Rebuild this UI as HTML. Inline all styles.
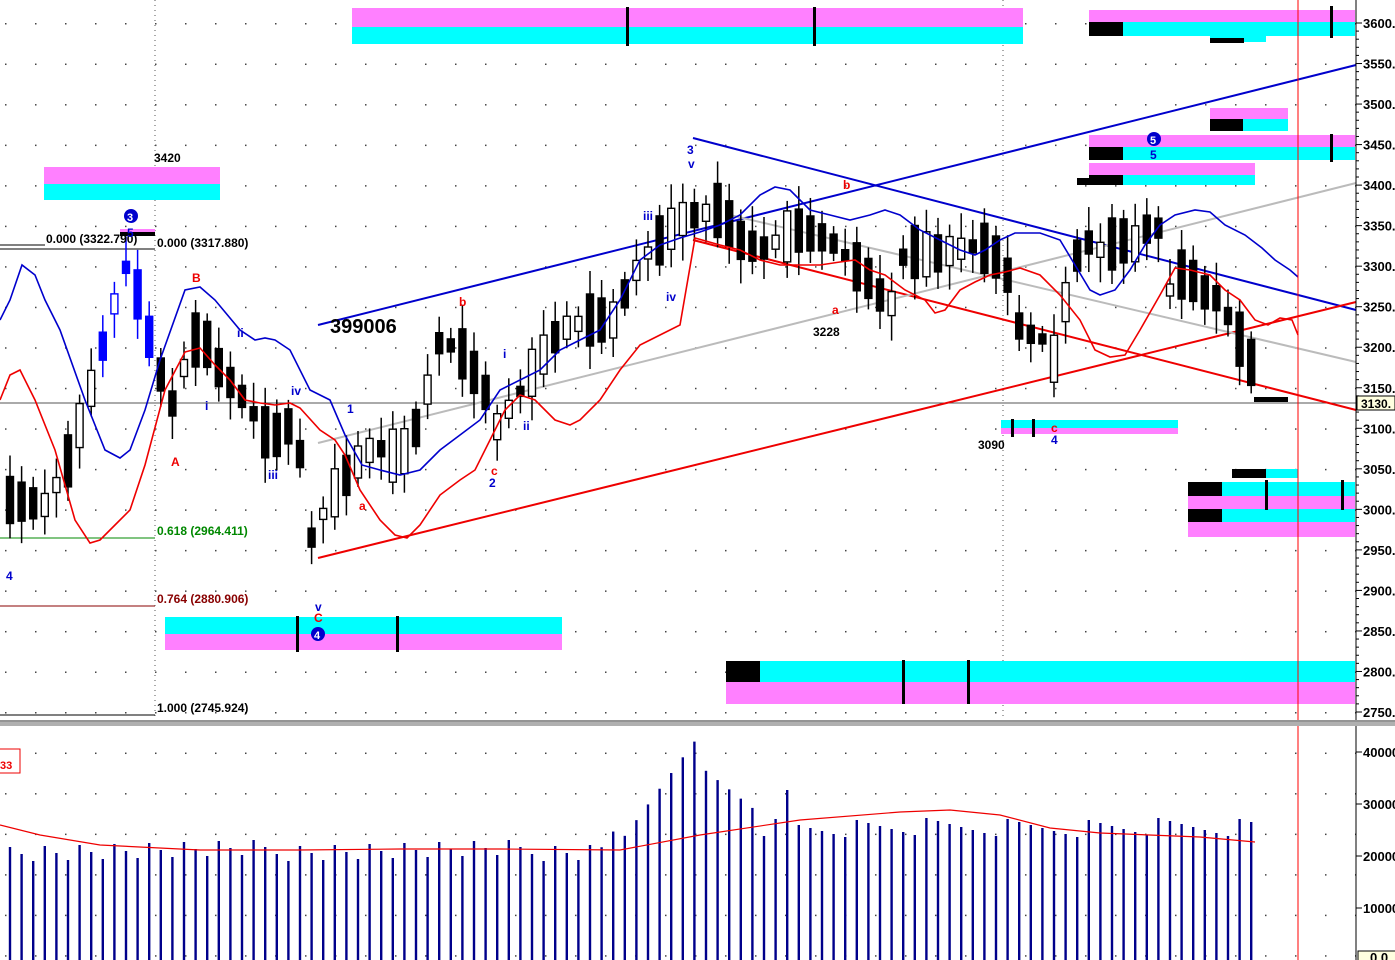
<!DOCTYPE html>
<html><head><meta charset="utf-8"><style>
html,body{margin:0;padding:0;background:#fff;overflow:hidden}
svg{display:block}
text{font-family:"Liberation Sans",Arial,sans-serif;font-weight:bold}
</style></head><body>
<svg id="s" width="1395" height="960" xmlns="http://www.w3.org/2000/svg">
<defs>
<pattern id="dots" x="0" y="0" width="30" height="40.53" patternUnits="userSpaceOnUse" patternTransform="translate(5,23)">
<rect x="0" y="0" width="1.5" height="1.5" fill="#444"/></pattern>
</defs>
<rect x="0" y="0" width="1395" height="960" fill="#fff"/>
<rect x="0" y="0" width="1356" height="720" fill="url(#dots)"/>
<rect x="0" y="730" width="1356" height="230" fill="url(#dots)"/>
<line x1="155" y1="0" x2="155" y2="720" stroke="#555" stroke-dasharray="1,4"/>
<line x1="1003" y1="0" x2="1003" y2="720" stroke="#555" stroke-dasharray="1,4"/>
<g id="bars">
<rect x="352" y="8" width="671" height="19" fill="#ff80ff"/><rect x="352" y="27" width="671" height="17" fill="#00ffff"/>
<rect x="626" y="7" width="3" height="39" fill="#000"/><rect x="813" y="7" width="3" height="39" fill="#000"/>
<rect x="44" y="167" width="176" height="17" fill="#ff80ff"/><rect x="44" y="184" width="176" height="16" fill="#00ffff"/>
<rect x="1089" y="10" width="266" height="12" fill="#ff80ff"/><rect x="1089" y="22" width="266" height="14" fill="#00ffff"/><rect x="1089" y="22" width="34" height="14" fill="#000"/>
<rect x="1210" y="36" width="56" height="6" fill="#00ffff"/><rect x="1210" y="38" width="34" height="5" fill="#000"/><rect x="1330" y="6" width="3" height="32" fill="#000"/>
<rect x="1210" y="108" width="78" height="11" fill="#ff80ff"/><rect x="1210" y="119" width="78" height="12" fill="#00ffff"/><rect x="1210" y="119" width="33" height="12" fill="#000"/>
<rect x="1089" y="135" width="266" height="12" fill="#ff80ff"/><rect x="1089" y="147" width="266" height="13" fill="#00ffff"/><rect x="1089" y="147" width="34" height="13" fill="#000"/><rect x="1330" y="134" width="3" height="28" fill="#000"/>
<rect x="1089" y="163" width="166" height="12" fill="#ff80ff"/><rect x="1089" y="175" width="166" height="10" fill="#00ffff"/><rect x="1077" y="178" width="46" height="7" fill="#000"/><rect x="1089" y="175" width="34" height="10" fill="#000"/>
<rect x="1001" y="420" width="177" height="8" fill="#00ffff"/><rect x="1001" y="428" width="177" height="6" fill="#ff80ff"/>
<rect x="1232" y="469" width="66" height="9" fill="#00ffff"/><rect x="1232" y="469" width="34" height="9" fill="#000"/>
<rect x="1188" y="482" width="167" height="14" fill="#00ffff"/><rect x="1188" y="482" width="34" height="14" fill="#000"/>
<rect x="1188" y="496" width="167" height="13" fill="#ff80ff"/>
<rect x="1188" y="509" width="167" height="13" fill="#00ffff"/><rect x="1188" y="509" width="34" height="13" fill="#000"/>
<rect x="1188" y="522" width="167" height="15" fill="#ff80ff"/>
<rect x="1265" y="480" width="3" height="30" fill="#000"/><rect x="1341" y="480" width="3" height="30" fill="#000"/>
<rect x="165" y="617" width="397" height="17" fill="#00ffff"/><rect x="165" y="634" width="397" height="16" fill="#ff80ff"/>
<rect x="296" y="616" width="3" height="36" fill="#000"/><rect x="396" y="616" width="3" height="36" fill="#000"/>
<rect x="726" y="661" width="629" height="21" fill="#00ffff"/><rect x="726" y="661" width="34" height="21" fill="#000"/><rect x="726" y="682" width="629" height="22" fill="#ff80ff"/>
<rect x="902" y="660" width="3" height="44" fill="#000"/><rect x="967" y="660" width="3" height="44" fill="#000"/>
<rect x="1011" y="419" width="3" height="18" fill="#000"/><rect x="1032" y="419" width="3" height="18" fill="#000"/>
<rect x="1254" y="397" width="34" height="5" fill="#000"/>
<rect x="120" y="229" width="35" height="5" fill="#ff80ff"/><rect x="120" y="232" width="35" height="4" fill="#000"/>
</g>
<line x1="0" y1="403" x2="1356" y2="403" stroke="#555" stroke-width="1"/>
<line x1="0" y1="249" x2="155" y2="249" stroke="#000"/><line x1="0" y1="245" x2="45" y2="245" stroke="#000"/>
<line x1="0" y1="538" x2="155" y2="538" stroke="#080"/>
<line x1="0" y1="606" x2="155" y2="606" stroke="#800"/>
<line x1="0" y1="715" x2="155" y2="715" stroke="#000"/>
<line x1="318" y1="325" x2="1356" y2="65" stroke="#00c" stroke-width="2"/>
<line x1="693" y1="138" x2="1356" y2="310" stroke="#00c" stroke-width="2"/>
<line x1="318" y1="558" x2="1356" y2="302" stroke="#e00" stroke-width="2"/>
<line x1="693" y1="240" x2="1356" y2="410" stroke="#e00" stroke-width="2"/>
<line x1="318" y1="443" x2="1356" y2="183" stroke="#bbb" stroke-width="2"/>
<line x1="730" y1="215" x2="1356" y2="362" stroke="#bbb" stroke-width="2"/>
<g id="cand"></g>
<polyline id="blue" fill="none" stroke="#00c" stroke-width="1.6"/>
<polyline id="red" fill="none" stroke="#e00" stroke-width="1.6"/>
<g id="vol"></g>
<polyline id="vred" fill="none" stroke="#e00" stroke-width="1.2" points="0,825 40,835 100,845 200,850 300,850 400,849 500,849 620,850 700,835 800,820 900,812 950,810 1000,815 1050,828 1100,833 1200,837 1255,842"/>
<line x1="1298" y1="0" x2="1298" y2="960" stroke="#f00" stroke-width="1"/>
<rect x="1356" y="0" width="39" height="960" fill="#fff"/>
<line x1="1356" y1="0" x2="1356" y2="960" stroke="#000"/>
<rect x="0" y="720" width="1395" height="6" fill="#b0b0b0"/>
<line x1="0" y1="721" x2="1395" y2="721" stroke="#777"/>
<g id="axis" font-size="13" fill="#000"></g>
<rect x="1357" y="396" width="38" height="14" fill="#ffffe0" stroke="#000"/>
<text x="1361" y="408" font-size="12">3130.</text>
<g font-size="12">
<text x="154" y="162">3420</text>
<text x="46" y="243">0.000 (3322.790)</text>
<text x="157" y="247">0.000 (3317.880)</text>
<text x="157" y="535" fill="#080">0.618 (2964.411)</text>
<text x="157" y="603" fill="#800">0.764 (2880.906)</text>
<text x="157" y="712">1.000 (2745.924)</text>
<text x="813" y="336">3228</text>
<text x="978" y="449">3090</text>
<text x="330" y="333" font-size="20">399006</text>
<g fill="#e00"><text x="192" y="282">B</text><text x="171" y="466">A</text><text x="459" y="306">b</text><text x="491" y="475">c</text><text x="359" y="510">a</text><text x="843" y="189">b</text><text x="832" y="314">a</text><text x="1051" y="432">c</text><text x="314" y="622">C</text></g>
<g fill="#00c"><text x="6" y="580">4</text><text x="127" y="237">5</text><text x="237" y="337">ii</text><text x="205" y="410">i</text><text x="291" y="395">iv</text><text x="268" y="479">iii</text><text x="347" y="413">1</text><text x="489" y="487">2</text><text x="523" y="430">ii</text><text x="503" y="358">i</text><text x="643" y="220">iii</text><text x="666" y="301">iv</text><text x="687" y="154">3</text><text x="688" y="168">v</text><text x="315" y="611">v</text><text x="1051" y="444">4</text><text x="1150" y="159">5</text></g>
<circle cx="131" cy="216" r="7" fill="#00c"/><text x="127" y="221" fill="#fff" font-size="11">3</text>
<circle cx="318" cy="634" r="7" fill="#00c"/><text x="314" y="639" fill="#fff" font-size="11">4</text>
<circle cx="1154" cy="139" r="7" fill="#00c"/><text x="1150" y="144" fill="#fff" font-size="11">5</text>
</g>
<rect x="-2" y="749" width="22" height="24" fill="#fff" stroke="#e00"/><text x="0" y="769" fill="#e00" font-size="11">33</text>
</svg>
<script>
(function(){
var NS="http://www.w3.org/2000/svg";
function el(p,t,a){var e=document.createElementNS(NS,t);for(var k in a)e.setAttribute(k,a[k]);p.appendChild(e);return e;}
function pts(a){var s="";for(var i=0;i<a.length;i+=2)s+=a[i]+","+a[i+1]+" ";return s;}
document.getElementById("blue").setAttribute("points",pts([0,320,10,300,22,265,35,275,45,300,60,330,85,400,105,450,120,458,130,450,145,410,160,360,185,290,200,287,215,300,240,330,255,340,265,338,275,340,290,350,310,390,330,400,345,435,362,465,380,470,400,475,420,470,440,450,460,435,480,420,500,390,520,380,540,370,560,350,580,340,600,330,620,300,640,260,660,245,680,238,700,232,720,225,740,215,760,195,775,187,790,190,810,210,830,215,850,220,870,215,885,210,900,215,920,230,940,240,960,250,975,255,985,250,1000,240,1015,233,1040,233,1060,240,1075,265,1090,290,1100,295,1115,290,1130,270,1145,245,1160,225,1175,215,1195,210,1210,212,1225,225,1245,235,1262,248,1275,260,1290,270,1298,277]));
document.getElementById("red").setAttribute("points",pts([0,400,10,375,20,370,35,400,55,450,75,520,90,543,100,540,115,525,130,510,145,465,165,390,185,352,200,348,215,365,230,380,245,400,260,403,275,405,290,403,300,408,320,430,335,440,345,455,360,490,380,520,395,535,407,538,420,525,440,495,460,480,475,470,490,440,505,410,520,395,535,400,555,420,570,425,580,420,600,400,620,370,640,345,660,335,680,325,695,238,720,245,740,250,760,260,780,265,800,265,820,265,840,262,855,260,870,270,885,275,905,290,925,300,935,313,945,310,960,290,975,282,990,275,1005,272,1020,268,1040,275,1060,295,1080,320,1095,350,1110,357,1125,355,1140,330,1160,295,1175,268,1190,270,1210,275,1225,290,1240,300,1255,320,1268,325,1280,318,1292,320,1298,335]));
var key=[[10,500],[45,505],[65,470],[88,400],[110,320],[125,265],[140,300],[155,360],[175,410],[190,340],[205,340],[220,370],[245,400],[270,440],[297,420],[308,545],[330,500],[350,470],[375,445],[400,460],[420,420],[440,340],[460,350],[485,390],[495,430],[515,400],[540,360],[560,330],[590,320],[615,320],[630,280],[650,250],[680,220],[695,215],[720,210],[740,240],[760,250],[780,240],[800,230],[830,240],[850,260],[870,280],[890,310],[905,250],[930,255],[955,250],[980,245],[1000,260],[1010,280],[1020,330],[1045,340],[1057,365],[1070,270],[1085,240],[1100,250],[1120,240],[1140,245],[1155,210],[1170,290],[1185,270],[1200,290],[1220,300],[1235,330],[1255,370]];
function mid(x){for(var i=0;i<key.length-1;i++){if(x<=key[i+1][0]){var a=key[i],b=key[i+1],t=(x-a[0])/(b[0]-a[0]);return a[1]+t*(b[1]-a[1]);}}return key[key.length-1][1];}
var g=document.getElementById("cand"),v=document.getElementById("vol");
var n=0;
for(var x=10;x<=1256;x+=11.6){n++;var m=mid(x),m2=mid(x+11.6);var up=m2<m;var h=10+((n*37)%45);var col=(x<160&&x>95)?"#00f":"#000";
var bt=m-h/2,bb=m+h/2;
el(g,"line",{x1:x,y1:bt-8-(n*13%18),x2:x,y2:bb+8+(n*7%18),stroke:col,"stroke-width":1.5});
el(g,"rect",{x:x-3.5,y:bt,width:7,height:h,fill:(n%3==0||!up)?col:"#fff",stroke:col,"stroke-width":1.4});
var vt;
if(x<600)vt=848+((n*29)%22)-8;else if(x<705){var k=(x-600)/105;vt=845-k*115+((n*17)%20);}else if(x<760)vt=770+(x-705)*0.8;else vt=828+((n*23)%20)-10;
if(x>=784&&x<=796)vt=790;
el(v,"rect",{x:x-1.2,y:vt,width:2.4,height:960-vt,fill:"#00008b"});}
var ax=document.getElementById("axis");
for(var p=3600;p>=2750;p-=50){var y=23+(3600-p)*0.8106;el(ax,"line",{x1:1356,y1:y,x2:1362,y2:y,stroke:"#000"});var t=el(ax,"text",{x:1363,y:y+5});t.textContent=p+".";
for(var j=1;j<5;j++){var yy=y+j*8.1;if(yy<718)el(ax,"line",{x1:1356,y1:yy,x2:1359,y2:yy,stroke:"#000"});}}
var vl=[[40000,752],[30000,804],[20000,856],[10000,908]];
vl.forEach(function(a){el(ax,"line",{x1:1356,y1:a[1],x2:1362,y2:a[1],stroke:"#000"});var t=el(ax,"text",{x:1363,y:a[1]+5});t.textContent=a[0];});
el(ax,"rect",{x:1358,y:951,width:40,height:12,fill:"#ffffe0",stroke:"#000"});var t=el(ax,"text",{x:1370,y:962});t.textContent="0.0";
})();
</script>
</body></html>
